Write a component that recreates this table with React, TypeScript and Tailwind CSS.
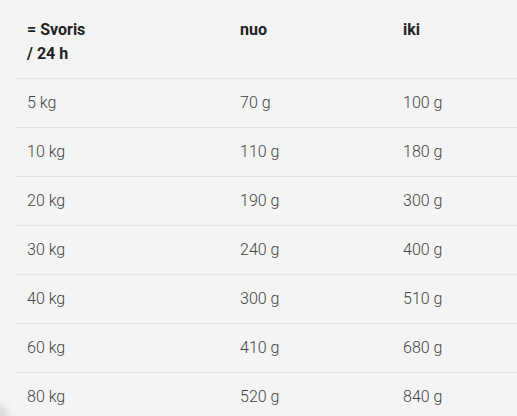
const rows = [
  ['5 kg', '70 g', '100 g'],
  ['10 kg', '110 g', '180 g'],
  ['20 kg', '190 g', '300 g'],
  ['30 kg', '240 g', '400 g'],
  ['40 kg', '300 g', '510 g'],
  ['60 kg', '410 g', '680 g'],
  ['80 kg', '520 g', '840 g'],
];

export default function App() {
  return (
    <div
      className="relative w-[517px] h-[416px] overflow-hidden bg-[#f4f4f4]"
      style={{ fontFamily: 'Roboto, "Liberation Sans", sans-serif' }}
    >
      <div className="ml-[15px] w-[620px]">
        {/* header */}
        <div className="flex h-[79px] border-b border-[#e2e2e2] pt-[18px] text-[16px] leading-[24px] font-bold text-[#222]">
          <div className="w-[213px] px-3">
            = Svoris
            <br />/ 24 h
          </div>
          <div className="w-[163px] px-3">nuo</div>
          <div className="px-3">iki</div>
        </div>

        {rows.map((r) => (
          <div
            key={r[0]}
            className="flex h-[49px] items-center border-b border-[#e2e2e2] text-[16px] font-light text-[#444]"
          >
            <div className="w-[213px] px-3">{r[0]}</div>
            <div className="w-[163px] px-3">{r[1]}</div>
            <div className="px-3">{r[2]}</div>
          </div>
        ))}
      </div>

      {/* faint corner shadow */}
      <div className="absolute -left-[14px] bottom-[-14px] w-[22px] h-[26px] rounded-full bg-black/10 blur-[4px]" />
    </div>
  );
}
